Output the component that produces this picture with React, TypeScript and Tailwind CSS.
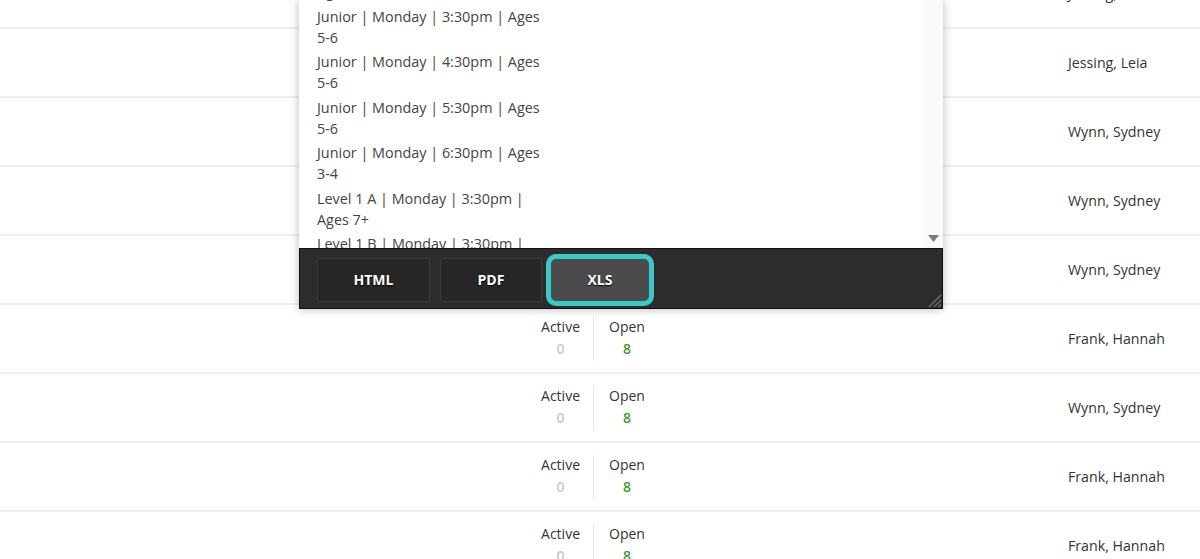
import React from 'react';

type Row = { name: string; active: number; open: number };

const rows: Row[] = [
    { name: 'Jessing, Leia', active: 0, open: 8 },
    { name: 'Jessing, Leia', active: 0, open: 8 },
    { name: 'Wynn, Sydney', active: 0, open: 8 },
    { name: 'Wynn, Sydney', active: 0, open: 8 },
    { name: 'Wynn, Sydney', active: 0, open: 8 },
    { name: 'Frank, Hannah', active: 0, open: 8 },
    { name: 'Wynn, Sydney', active: 0, open: 8 },
    { name: 'Frank, Hannah', active: 0, open: 8 },
    { name: 'Frank, Hannah', active: 0, open: 8 },
];

const classes = [
    'Level 1 C | Sunday | 4:30pm | Ages 7+',
    'Junior | Monday | 3:30pm | Ages 5-6',
    'Junior | Monday | 4:30pm | Ages 5-6',
    'Junior | Monday | 5:30pm | Ages 5-6',
    'Junior | Monday | 6:30pm | Ages 3-4',
    'Level 1 A | Monday | 3:30pm | Ages 7+',
    'Level 1 B | Monday | 3:30pm | Ages 7+',
    'Level 1 C | Monday | 4:30pm | Ages 7+',
];

const ResizeGrip = () => (
    <svg width="16" height="16" viewBox="0 0 16 16" className="absolute right-0 bottom-0">
        <line x1="15" y1="3" x2="3" y2="15" stroke="#6b6b6b" strokeWidth="1.5" />
        <line x1="15" y1="8" x2="8" y2="15" stroke="#6b6b6b" strokeWidth="1.5" />
        <line x1="15" y1="12.5" x2="12.5" y2="15" stroke="#6b6b6b" strokeWidth="1.5" />
    </svg>
);

const ExportMenu = () => (
    <div className="absolute top-0 left-[299px] w-[644px] bg-white shadow-[0_0_9px_rgba(0,0,0,0.28)]">
        {/* scrolling class list */}
        <div className="relative h-[248px] overflow-hidden">
            <div className="flex flex-col gap-[3.5px] pl-[18px] mt-[-40px]">
                {classes.map((c, i) => (
                    <p key={i} className="w-[236px] text-[14.4px] leading-[21px] text-[#444]">
                        {c}
                    </p>
                ))}
            </div>
            <div className="absolute top-0 right-0 h-full w-[20px] bg-[#fafafa] flex items-end justify-center pb-[6px]">
                <svg width="11" height="7" viewBox="0 0 11 7">
                    <path d="M0 0 H11 L5.5 7 Z" fill="#7a7a7a" />
                </svg>
            </div>
        </div>

        {/* export buttons */}
        <div className="relative h-[61px] bg-[#2c2c2c] border border-[#111] flex items-center gap-[10px] px-[17px] pt-[2px]">
            <button className="w-[113px] h-[44px] rounded-[3px] bg-[#262626] border border-[#3c3c3c] text-white text-[14px] font-bold [text-shadow:0_1px_1px_#000]">
                HTML
            </button>
            <button className="w-[102px] h-[44px] rounded-[3px] bg-[#262626] border border-[#3c3c3c] text-white text-[14px] font-bold [text-shadow:0_1px_1px_#000]">
                PDF
            </button>
            <button className="-ml-[6px] w-[108px] h-[52px] rounded-[10px] bg-[#4b4b4b] border-[5px] border-[#3cc8c8] text-white text-[14px] font-bold [text-shadow:0_1px_1px_#000]">
                XLS
            </button>
            <ResizeGrip />
        </div>
    </div>
);

export default function App() {
    return (
        <div
            className="relative h-[559px] overflow-hidden bg-white text-[#333]"
            style={{ fontFamily: '"Open Sans", "Liberation Sans", sans-serif' }}
        >
            {/* roster table */}
            <div className="mt-[-40px]">
                {rows.map((r, i) => (
                    <div key={i} className="h-[69px] border-b-2 border-[#efefef] flex items-center">
                        <div className="w-[530px]" />
                        <div className="w-[64px] h-[44px] border-r border-[#e6e6e6] flex justify-end pr-[13px]">
                            <div className="flex flex-col items-center text-[14px]">
                                <span className="leading-[20px]">Active</span>
                                <span className="leading-[24px] font-semibold text-[#c9c9c9]">{r.active}</span>
                            </div>
                        </div>
                        <div className="w-[474px] h-[44px] pl-[15px] flex">
                            <div className="flex flex-col items-center text-[14px]">
                                <span className="leading-[20px]">Open</span>
                                <span className="leading-[24px] font-semibold text-[#3f9a2f]">{r.open}</span>
                            </div>
                        </div>
                        <div className="flex-1 text-[14.2px]">{r.name}</div>
                    </div>
                ))}
            </div>

            <ExportMenu />
        </div>
    );
}
